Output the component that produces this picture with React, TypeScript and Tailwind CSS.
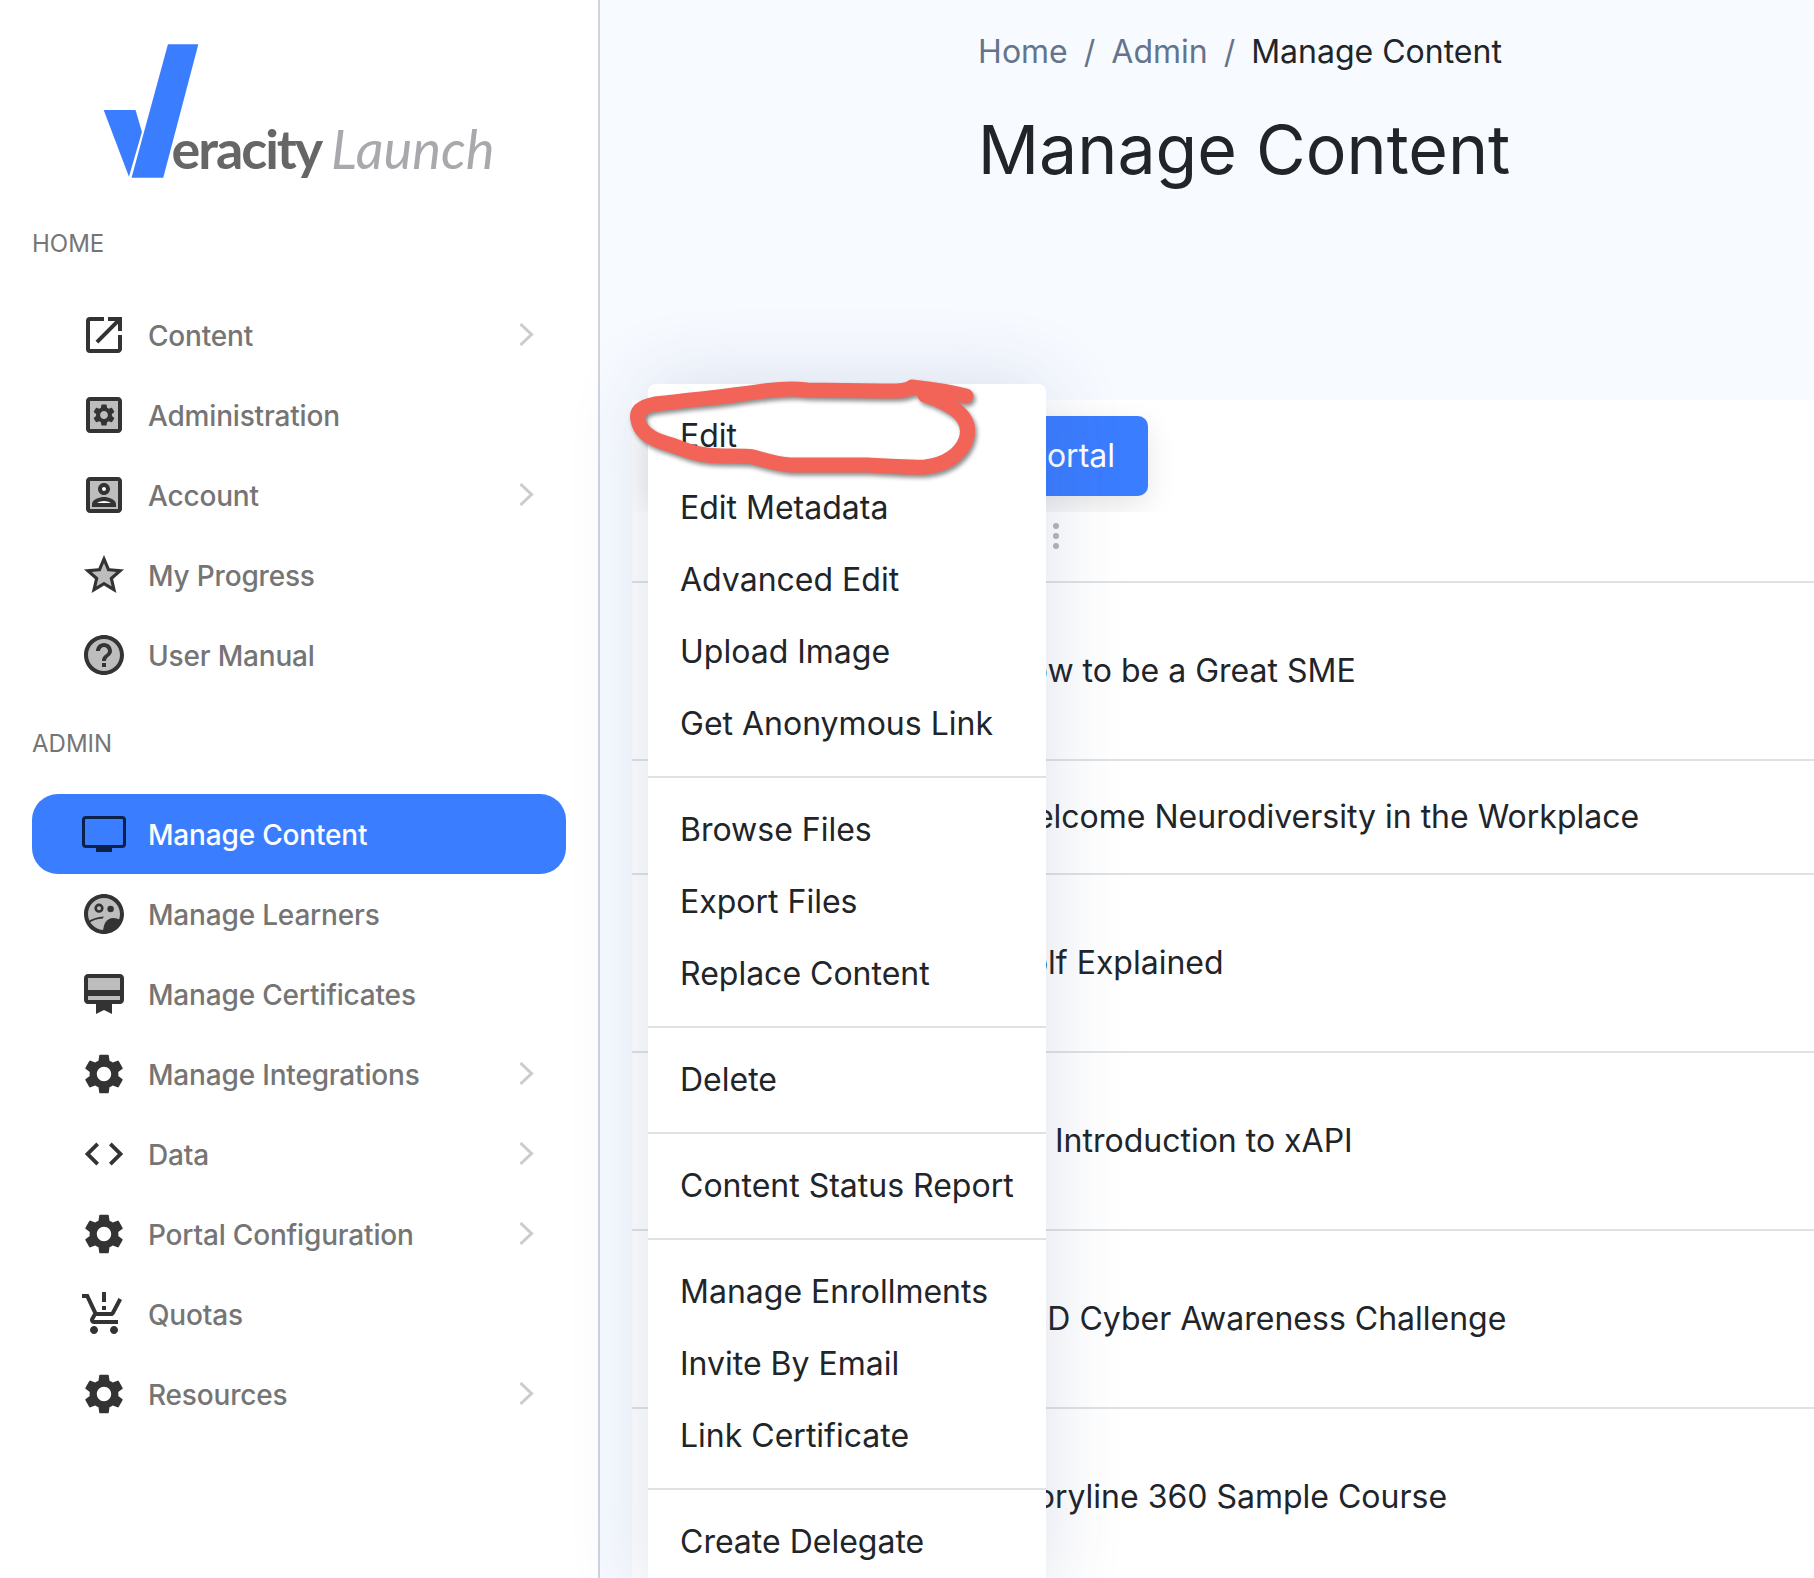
import React from 'react';
import { MdSettings, MdCode, MdOpenInNew, MdProductionQuantityLimits } from 'react-icons/md';

const GEAR =
  'M19.14 12.94c.04-.3.06-.61.06-.94 0-.32-.02-.64-.07-.94l2.03-1.58c.18-.14.23-.41.12-.61l-1.92-3.32c-.12-.22-.37-.29-.59-.22l-2.39.96c-.5-.38-1.03-.7-1.62-.94l-.36-2.54c-.04-.24-.24-.41-.48-.41h-3.84c-.24 0-.43.17-.47.41l-.36 2.54c-.59.24-1.13.57-1.62.94l-2.39-.96c-.22-.08-.47 0-.59.22L2.74 8.87c-.12.21-.08.47.12.61l2.03 1.58c-.05.3-.09.63-.09.94s.02.64.07.94l-2.03 1.58c-.18.14-.23.41-.12.61l1.92 3.32c.12.22.37.29.59.22l2.39-.96c.5.38 1.03.7 1.62.94l.36 2.54c.05.24.24.41.48.41h3.84c.24 0 .44-.17.47-.41l.36-2.54c.59-.24 1.13-.56 1.62-.94l2.39.96c.22.08.47 0 .59-.22l1.92-3.32c.12-.22.07-.47-.12-.61l-2.01-1.58zM12 15.6c-1.98 0-3.6-1.62-3.6-3.6s1.62-3.6 3.6-3.6 3.6 1.62 3.6 3.6-1.62 3.6-3.6 3.6z';

const Svg = ({ children }: { children: React.ReactNode }) => (
  <svg viewBox="0 0 24 24" className="w-12 h-12" fill="#333333">
    {children}
  </svg>
);

const AdminIcon = () => (
  <Svg>
    <rect x="4" y="4" width="16" height="16" fill="#bdbdbd" />
    <path d="M19 3H5c-1.11 0-2 .89-2 2v14c0 1.11.89 2 2 2h14c1.11 0 2-.89 2-2V5c0-1.11-.89-2-2-2zm0 16H5V5h14v14z" />
    <path d={GEAR} transform="translate(5.4 5.4) scale(0.55)" />
  </Svg>
);

const AccountIcon = () => (
  <Svg>
    <rect x="4" y="4" width="16" height="16" fill="#bdbdbd" />
    <path d="M3 5v14c0 1.1.89 2 2 2h14c1.1 0 2-.89 2-2V5c0-1.1-.9-2-2-2H5c-1.11 0-2 .9-2 2zm2 0h14v14H5V5z" />
    <circle cx="12" cy="9" r="2" fill="#ffffff" />
    <path d="M12 12c1.65 0 3-1.35 3-3s-1.35-3-3-3-3 1.35-3 3 1.35 3 3 3zm0-4c.55 0 1 .45 1 1s-.45 1-1 1-1-.45-1-1 .45-1 1-1z" />
    <path d="M8.48 16c.74-.51 2.23-1 3.52-1s2.78.49 3.52 1z" fill="#ffffff" />
    <path d="M18 16.58c0-2.5-3.97-3.58-6-3.58s-6 1.08-6 3.58V18h12v-1.42zM8.48 16c.74-.51 2.23-1 3.52-1s2.78.49 3.52 1H8.48z" />
  </Svg>
);

const StarIcon = () => (
  <Svg>
    <path d="M12 15.4l-3.76 2.27 1-4.28-3.32-2.88 4.38-.38L12 6.1l1.71 4.04 4.38.38-3.32 2.88 1 4.28z" fill="#bdbdbd" />
    <path d="M22 9.24l-7.19-.62L12 2 9.19 8.63 2 9.24l5.46 4.73L5.82 21 12 17.27 18.18 21l-1.63-7.03L22 9.24zM12 15.4l-3.76 2.27 1-4.28-3.32-2.88 4.38-.38L12 6.1l1.71 4.04 4.38.38-3.32 2.88 1 4.28L12 15.4z" />
  </Svg>
);

const HelpIcon = () => (
  <Svg>
    <circle cx="12" cy="12" r="9" fill="#bdbdbd" />
    <path d="M11 18h2v-2h-2v2zm1-16C6.48 2 2 6.48 2 12s4.48 10 10 10 10-4.48 10-10S17.52 2 12 2zm0 18c-4.41 0-8-3.59-8-8s3.59-8 8-8 8 3.59 8 8-3.59 8-8 8zm0-14c-2.21 0-4 1.79-4 4h2c0-1.1.9-2 2-2s2 .9 2 2c0 2-3 1.75-3 5h2c0-2.25 3-2.5 3-5 0-2.21-1.79-4-4-4z" />
  </Svg>
);

const MonitorIcon = () => (
  <svg viewBox="0 0 44 36" className="w-[44px] h-[36px] mx-[2px]">
    <rect x="1.5" y="1.5" width="41" height="29" rx="2.5" fill="none" stroke="#0b2148" strokeWidth="3" />
    <rect x="14" y="31" width="16" height="5" fill="#0b2148" />
  </svg>
);

const LearnersIcon = () => (
  <Svg>
    <circle cx="12" cy="12" r="9" fill="#bdbdbd" />
    <path d="M11.500 20.500c.2-1.500.4-3 1.200-4.300.9-1.400 2.300-2.200 3.900-2.200 1.300 0 2.500.4 3.500 1.100-1.300 3.100-4.400 5.400-8.600 5.400z" />
    <path d="M3.900 15.800c2.300-1.500 5-2.300 8-2.500l-.5.900c-2.700.2-5 .9-6.900 2.200z" />
    <path d="M12 2C6.480 2 2 6.480 2 12s4.480 10 10 10 10-4.480 10-10S17.520 2 12 2zm0 18c-4.410 0-8-3.590-8-8s3.590-8 8-8 8 3.590 8 8-3.590 8-8 8z" />
    <path d="M9.500 6.800a2.300 2.300 0 1 0 0 4.600 2.300 2.300 0 0 0 0-4.600zm0 3.300a1 1 0 1 1 0-2 1 1 0 0 1 0 2z" />
    <circle cx="15.300" cy="9.500" r="1.600" />
  </Svg>
);

const CertIcon = () => (
  <Svg>
    <rect x="3" y="3" width="18" height="8" fill="#bdbdbd" />
    <rect x="3" y="12" width="18" height="3" fill="#bdbdbd" />
    <path d="M20 2H4c-1.110 0-2 .890-2 2v11c0 1.110.890 2 2 2h4v5l4-2 4 2v-5h4c1.110 0 2-.890 2-2V4c0-1.110-.890-2-2-2zm0 13H4v-2h16v2zm0-5H4V4h16v6z" />
  </Svg>
);

const Chevron = () => (
  <svg viewBox="0 0 15 23" className="w-[15px] h-[23px] mb-[2px]" fill="none" stroke="#cccccc" strokeWidth="3">
    <path d="M1.500 1l11 10.500L1.500 22" />
  </svg>
);

const gear = <MdSettings size={48} color="#333333" />;

const homeItems = [
  { label: 'Content', icon: <MdOpenInNew size={48} color="#333333" />, more: true },
  { label: 'Administration', icon: <AdminIcon /> },
  { label: 'Account', icon: <AccountIcon />, more: true },
  { label: 'My Progress', icon: <StarIcon /> },
  { label: 'User Manual', icon: <HelpIcon /> },
];

const adminItems = [
  { label: 'Manage Content', icon: <MonitorIcon />, active: true },
  { label: 'Manage Learners', icon: <LearnersIcon /> },
  { label: 'Manage Certificates', icon: <CertIcon /> },
  { label: 'Manage Integrations', icon: gear, more: true },
  { label: 'Data', icon: <MdCode size={46} color="#333333" />, more: true },
  { label: 'Portal Configuration', icon: gear, more: true },
  { label: 'Quotas', icon: <MdProductionQuantityLimits size={48} color="#333333" /> },
  { label: 'Resources', icon: gear, more: true },
];

type NavItemProps = { label: string; icon: React.ReactNode; more?: boolean; active?: boolean };

const NavItem = ({ label, icon, more, active }: NavItemProps) => (
  <div
    className={`mx-8 h-20 pl-12 pr-8 flex items-center gap-5 rounded-[26px] text-[28px] font-medium tracking-[-0.18px] ${
      active ? 'bg-[#3b7dff] text-white' : 'text-[#757575]'
    }`}
  >
    <span className="w-12 h-12 flex items-center justify-center shrink-0">{icon}</span>
    <span className="flex-1 pt-[1px]">{label}</span>
    {more && <Chevron />}
  </div>
);

const Logo = () => (
  <svg viewBox="0 0 600 220" className="w-[598px] h-[220px] shrink-0">
    <polygon points="168.500,44 199,44 163.800,178 132,178" fill="#3b7dff" />
    <polygon points="104,110 136,110 142.400,132 129.400,177" fill="#3b7dff" />
    <text x="172" y="169" fontFamily="Lato, sans-serif" fontWeight="700" fontSize="54" fill="#666666" letterSpacing="-2">
      eracity
    </text>
    <text x="332" y="169" fontFamily="Lato, sans-serif" fontStyle="italic" fontSize="54.500" fill="#a9a9ad">
      Launch
    </text>
  </svg>
);

const rows = [
  { title: 'How to be a Great SME', h: 'h-[178px]' },
  { title: 'Welcome Neurodiversity in the Workplace', h: 'h-[114px]' },
  { title: 'Golf Explained', h: 'h-[178px]' },
  { title: 'An Introduction to xAPI', h: 'h-[178px]' },
  { title: 'DoD Cyber Awareness Challenge', h: 'h-[178px]' },
  { title: 'Storyline 360 Sample Course', h: 'h-[178px]' },
];

const menuGroups = [
  ['Edit', 'Edit Metadata', 'Advanced Edit', 'Upload Image', 'Get Anonymous Link'],
  ['Browse Files', 'Export Files', 'Replace Content'],
  ['Delete'],
  ['Content Status Report'],
  ['Manage Enrollments', 'Invite By Email', 'Link Certificate'],
  ['Create Delegate'],
];

const ActionMenu = () => (
  <div className="absolute left-[648px] top-[384px] w-[398px] pt-4 pb-4 rounded-lg bg-white shadow-[0_0_80px_rgba(50,70,130,0.16)] text-[32px] text-[#212529]">
    {menuGroups.map((group, i) => (
      <div key={i}>
        {i > 0 && <div className="h-[2px] my-4 bg-[#dee2e6]" />}
        {group.map((item) => (
          <div key={item} className="h-[72px] px-8 flex items-center whitespace-nowrap">
            {item}
          </div>
        ))}
      </div>
    ))}
  </div>
);

// hand-drawn red circle around "Edit"
const Scribble = () => (
  <svg className="absolute left-0 top-0 w-[1814px] h-[1578px] pointer-events-none drop-shadow-[2px_3px_2px_rgba(0,0,0,0.45)]" fill="none">
    <path
      d="M966 396C950 392 930 389 912 387C905 392 895 391 883 391L807 390C790 388 775 389 734 395C715 398 695 399 655 404C640 407 636 412 638 420C640 432 652 439 665 443C680 447 690 454 707 455C725 457 740 455 753 457C765 460 775 464 791 465L868 465C890 466 910 468 925 467C945 465 960 455 966 440C970 428 966 418 956 410C945 402 935 398 925 395"
      stroke="#f26457"
      strokeWidth="15"
      strokeLinecap="round"
      strokeLinejoin="round"
    />
  </svg>
);

export default function App() {
  return (
    <div className="relative w-[1814px] h-[1578px] overflow-hidden flex bg-white font-['Inter',sans-serif]">
      <aside className="w-[600px] shrink-0 border-r-2 border-[#ced4da] bg-white">
        <Logo />
        <div className="h-12 mb-[27px] pl-8 flex items-center text-[24px] text-[#757575]">HOME</div>
        {homeItems.map((item) => (
          <NavItem key={item.label} {...item} />
        ))}
        <div className="h-12 mt-[25px] mb-[26px] pl-8 flex items-center text-[24px] text-[#757575]">ADMIN</div>
        {adminItems.map((item) => (
          <NavItem key={item.label} {...item} />
        ))}
      </aside>

      <main className="flex-1 flex flex-col bg-[#f7faff] pl-8">
        <header className="h-[400px] shrink-0 pl-[38px] flex flex-col items-center">
          <nav className="mt-[30px] mr-[4px] h-11 flex items-center gap-4 text-[32px] text-[#64748b]">
            <span>Home</span>
            <span>/</span>
            <span>Admin</span>
            <span>/</span>
            <span className="text-[#212529]">Manage Content</span>
          </nav>
          <h1 className="mt-[37px] ml-[4px] text-[68px] leading-[76px] text-[#212529]">Manage Content</h1>
        </header>

        <section className="flex-1 bg-white text-[32px] text-[#212529]">
          <div className="h-[112px] overflow-hidden pt-4 pl-4">
            <div className="w-[500px] h-20 pr-[33px] flex items-center justify-end rounded-[10px] bg-[#3b7dff] text-white shadow-[0_10px_30px_rgba(0,0,0,0.1)]">
              Add Content To Portal
            </div>
          </div>
          <div className="h-[71px] border-b-2 border-[#dee2e6] pl-[421px] pt-[11px] flex flex-col gap-1">
            <span className="w-[6px] h-[6px] rounded-full bg-[#b5b5b5]" />
            <span className="w-[6px] h-[6px] rounded-full bg-[#b5b5b5]" />
            <span className="w-[6px] h-[6px] rounded-full bg-[#b5b5b5]" />
          </div>
          {rows.map((row) => (
            <div key={row.title} className={`${row.h} border-b-2 border-[#dee2e6] pl-[373px] flex items-center whitespace-nowrap`}>
              {row.title}
            </div>
          ))}
        </section>
      </main>

      <ActionMenu />
      <Scribble />
    </div>
  );
}
